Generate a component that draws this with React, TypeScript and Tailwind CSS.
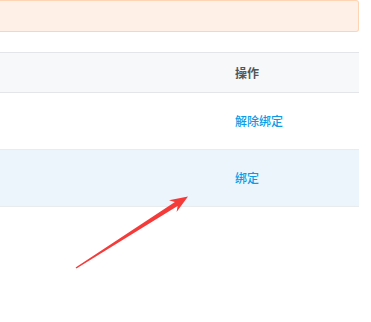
const rows = [
  { action: '解除绑定', highlight: false },
  { action: '绑定', highlight: true }
]

export default function App() {
  return (
    <div
      className="relative w-[371px] h-[322px] bg-white overflow-hidden"
      style={{ fontFamily: '"Noto Sans CJK SC", "Noto Sans", sans-serif' }}
    >
      {/* Notice bar */}
      <div className="w-[359px] h-[32px] bg-[#fef0e6] border border-l-0 border-[#fdd5b4] rounded-r-[3px]" />

      {/* Table */}
      <div className="mt-[20px] w-[359px]">
        <div className="grid grid-cols-[1fr_124px] h-[41px] bg-[#f7f8fa] border-y border-[#e3e5e8] items-center">
          <div />
          <div className="text-[12px] font-bold text-[#555] leading-none">操作</div>
        </div>
        {rows.map((row, i) => (
          <div
            key={i}
            className={`grid grid-cols-[1fr_124px] h-[57px] items-center border-b border-[#e8ecef] ${
              row.highlight ? 'bg-[#edf5fc]' : 'bg-white'
            }`}
          >
            <div />
            <a className="text-[12px] font-medium text-[#0c9be6] leading-none cursor-pointer">{row.action}</a>
          </div>
        ))}
      </div>

      {/* Annotation arrow */}
      <svg className="absolute left-0 top-0 pointer-events-none" width="371" height="322">
        <polygon
          points="75.6,267.6 174.9,201.9 169,200.3 188,196.5 176.6,212.1 177.6,206.1 76.4,268.5"
          fill="#f53a3a"
        />
      </svg>
    </div>
  )
}
